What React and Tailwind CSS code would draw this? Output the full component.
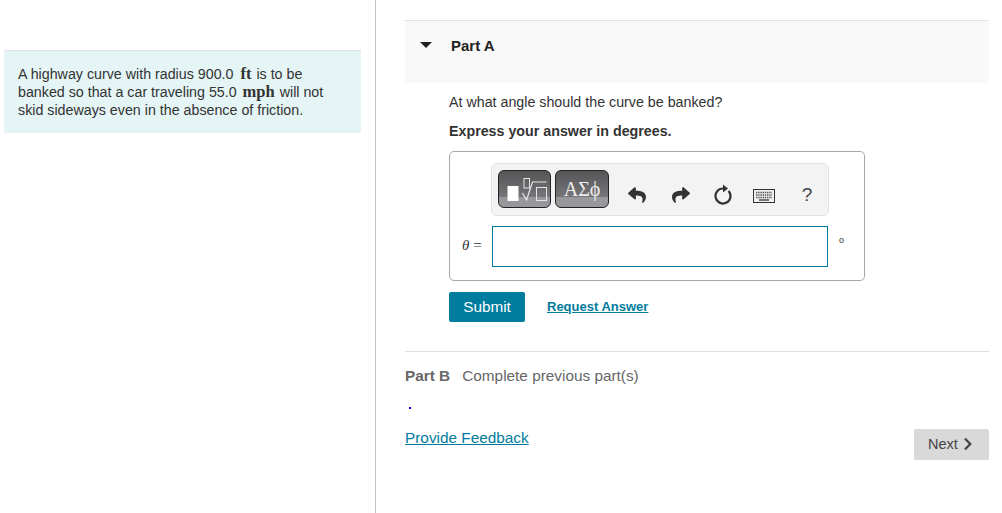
// App.jsx
import { FaChevronRight, FaReply, FaShare } from 'react-icons/fa';

const TemplatesIcon = () => (
  <svg width="46" height="32" viewBox="0 0 46 32" fill="none">
    <rect x="5.500" y="13" width="11" height="15" fill="#fff" />
    <rect x="22" y="5.500" width="5.500" height="9.500" stroke="#e4e4e4" strokeWidth="1" />
    <path d="M20.500 20l4 7 6-18h14" stroke="#e8e8e8" strokeWidth="1.200" />
    <rect x="34.500" y="14.500" width="10" height="13" stroke="#e4e4e4" strokeWidth="1" />
  </svg>
);

const RefreshIcon = () => (
  <svg width="20" height="22" viewBox="0 0 20 22" fill="none">
    <path d="M15.500 6.900A7.500 7.500 0 1 1 10 4.500" stroke="#333" strokeWidth="2.200" />
    <path d="M10 0.500l5 4-5 4z" fill="#333" />
  </svg>
);

const KeyboardIcon = () => (
  <svg width="22" height="14" viewBox="0 0 22 14" fill="none">
    <rect x="0.500" y="0.500" width="21" height="13" fill="#eee" stroke="#333" />
    <path d="M3 3.500h16M3 6h16M3 8.500h16" stroke="#555" strokeWidth="1.400" strokeDasharray="1.400 .8" />
    <path d="M6 11h10" stroke="#444" strokeWidth="1.400" />
  </svg>
);

const PaletteButton = ({ className, children }) => (
  <button className={`-mt-[1px] flex h-[38px] shrink-0 items-center justify-center rounded-[6px] border border-[#222] bg-[linear-gradient(#555557_0%,#76767a_72%,#98989c_73%,#98989c_100%)] ${className}`}>
    {children}
  </button>
);

const Toolbar = () => (
  <div className="ml-[41px] flex h-[53px] w-[338px] items-center rounded-[6px] border border-[#e2e2e2] bg-[#f3f3f3] pl-[6px]">
    <PaletteButton className="w-[53px]"><TemplatesIcon /></PaletteButton>
    <PaletteButton className="ml-[4px] w-[54px] font-['Liberation_Serif',serif] text-[20px] text-[#eeeeee]">ΑΣϕ</PaletteButton>
    <div className="ml-[6px] flex items-center pt-[10px] text-[#333]">
      <span className="flex w-[43px] shrink-0 justify-center"><FaReply size={18} /></span>
      <span className="flex w-[44px] shrink-0 justify-center pl-[1px]"><FaShare size={18} /></span>
      <span className="flex w-[42px] shrink-0 justify-center"><RefreshIcon /></span>
      <span className="mt-[3px] flex w-[39px] shrink-0 justify-center"><KeyboardIcon /></span>
      <span className="ml-[3px] flex w-[42px] shrink-0 justify-center text-[19px] text-[#444]">?</span>
    </div>
  </div>
);

export default function App() {
  return (
    <div className="flex h-[513px] overflow-hidden bg-white font-['Liberation_Sans',Arial,sans-serif] text-[14.25px] leading-[18px] text-[#333]">
      <aside className="w-[376px] shrink-0 border-r border-[#c4c4c4] pl-[4px] pr-[14px] pt-[50px]">
        <div className="h-[83px] border-t border-[#dde3e6] bg-[#e5f5f6] pl-[14px] pr-[30px] pt-[14px]">
          A highway curve with radius 900.0 <span className="ml-[3px] mr-[1px] font-['Liberation_Serif',serif] text-[16.5px] font-bold leading-none">ft</span> is to be banked so that a car traveling 55.0 <span className="ml-[2px] mr-[1px] font-['Liberation_Serif',serif] text-[16.5px] font-bold leading-none">mph</span> will not skid sideways even in the absence of friction.
        </div>
      </aside>

      <main className="ml-[29px] flex w-[584px] flex-col pt-[20px]">
        <div className="flex h-[63px] border-t border-[#e2e2e2] bg-[#f9f9f9] pt-[16px]">
          <span className="ml-[15px] mt-[5px] h-0 w-0 border-x-[6px] border-t-[6px] border-x-transparent border-t-[#222]" />
          <span className="ml-[19px] text-[15px] font-bold text-[#222]">Part A</span>
        </div>

        <div className="ml-[44px] flex flex-col">
          <p className="mt-[10px]">At what angle should the curve be banked?</p>
          <p className="mt-[11px] font-bold">Express your answer in degrees.</p>

          <div className="mt-[11px] h-[130px] w-[416px] rounded-[5px] border border-[#a8a8a8] pt-[11px]">
            <Toolbar />
            <div className="mt-[10px] flex items-start">
              <span className="ml-[12px] mt-[10px] w-[30px] font-['Liberation_Serif',serif] text-[15px]"><i>θ</i> =</span>
              <input className="h-[41px] w-[336px] border border-[#007c9e] bg-white outline-none" />
              <span className="ml-[11px] mt-[5px] font-['Liberation_Serif',serif] text-[10px]">o</span>
            </div>
          </div>

          <div className="mt-[11px] flex items-center">
            <button className="h-[30px] w-[76px] rounded-[2px] bg-[#007c9e] text-[15.3px] text-white">Submit</button>
            <a className="ml-[22px] text-[13px] font-bold text-[#007c9e] underline">Request Answer</a>
          </div>
        </div>

        <div className="mt-[29px] flex h-[34px] items-end border-t border-[#dfdfdf] text-[15.35px] text-[#666]">
          <span className="font-bold">Part B</span>
          <span className="ml-[12px]">Complete previous part(s)</span>
        </div>

        <span className="ml-[4px] mt-[22px] h-[2px] w-[2px] bg-[#0000ff]" />

        <div className="flex items-start justify-between">
          <a className="mt-[20px] text-[15.35px] text-[#007c9e] underline">Provide Feedback</a>
          <button className="mt-[20px] flex h-[31px] w-[75px] items-center justify-center gap-[3px] rounded-[2px] bg-[#d9d9d9] pb-[1px] text-[14.5px] text-[#444]">
            Next <FaChevronRight size={14} />
          </button>
        </div>
      </main>
    </div>
  );
}
